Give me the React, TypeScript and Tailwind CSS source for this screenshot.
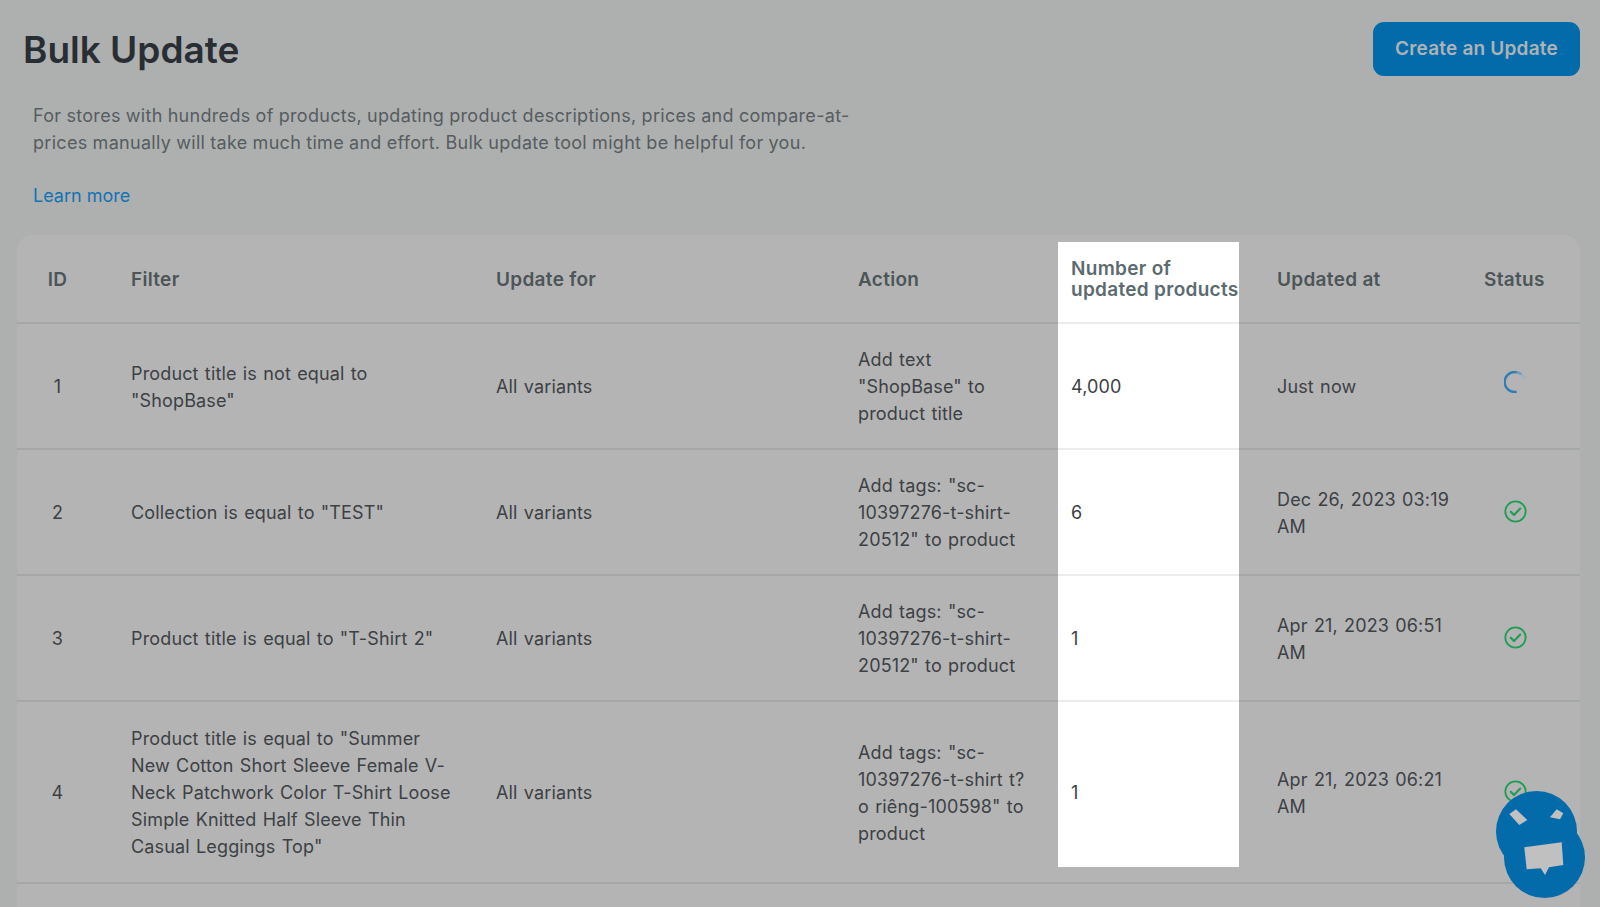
const GRID = 'grid grid-cols-[101px_365px_362px_213px_181px_232px_109px]';
const CELL = 'flex items-center border-b-[2px] border-[#a6a8a8] pb-[21px] pl-[13px] pr-[13px] pt-[22px] text-[18px] leading-[27px] tracking-[0.15px] [word-spacing:1px] text-[#3c4144]';

interface Row {
  id: number;
  filter: string;
  action: string;
  count: string;
  updated: string;
  status: 'running' | 'done';
}

const ROWS: Row[] = [
  { id: 1, filter: 'Product title is not equal to "ShopBase"', action: 'Add text "ShopBase" to product title', count: '4,000', updated: 'Just now', status: 'running' },
  { id: 2, filter: 'Collection is equal to "TEST"', action: 'Add tags: "sc-10397276-t-shirt-20512" to product', count: '6', updated: 'Dec 26, 2023 03:19 AM', status: 'done' },
  { id: 3, filter: 'Product title is equal to "T-Shirt 2"', action: 'Add tags: "sc-10397276-t-shirt-20512" to product', count: '1', updated: 'Apr 21, 2023 06:51 AM', status: 'done' },
  { id: 4, filter: 'Product title is equal to "Summer New Cotton Short Sleeve Female V-Neck Patchwork Color T-Shirt Loose Simple Knitted Half Sleeve Thin Casual Leggings Top"', action: 'Add tags: "sc-10397276-t-shirt t?o riêng-100598" to product', count: '1', updated: 'Apr 21, 2023 06:21 AM', status: 'done' },
];

function DoneIcon() {
  return (
    <svg width="23" height="23" viewBox="0 0 23 23" fill="none" stroke="#1f9d55" strokeWidth="1.8" strokeLinecap="round" strokeLinejoin="round" className="-mt-[2px]">
      <circle cx="11.5" cy="11.5" r="10.2" />
      <path d="M6.800 11.800l3.200 3.200 6.200-6.400" strokeWidth="2.200" />
    </svg>
  );
}

function Spinner() {
  return (
    <svg width="22" height="22" viewBox="0 0 22 22" fill="none" className="-mt-[10px]">
      <path d="M20.400 7.600A10 10 0 0 1 21 11" stroke="#adb5b8" strokeWidth="1.800" />
      <path d="M17.400 3.300A10 10 0 0 1 20.400 7.600" stroke="#9db0bd" strokeWidth="2.200" />
      <path d="M12.700 1.200A10 10 0 0 1 17.400 3.300" stroke="#6d9dc0" strokeWidth="2.400" />
      <path d="M12.700 1.200A10 10 0 1 0 12.700 20.800" stroke="#2f7db5" strokeWidth="2.400" />
    </svg>
  );
}

function ChatBubble() {
  return (
    <div className="fixed left-[1496px] top-[791px] h-[116px] w-[90px]">
      <div className="absolute left-0 top-0 h-[81px] w-[81px] rounded-full bg-[#046bab]" />
      <div className="absolute left-[8px] top-[26px] h-[81px] w-[81px] rounded-full bg-[#046bab]" />
      <svg className="absolute left-0 top-0" width="90" height="116" viewBox="0 0 90 116" fill="#c0c0c0">
        <path d="M13.300 23L20 18.300 31.300 29 23.300 34z" />
        <path d="M54 26.300L60.700 18.300 67.300 22.300 64 28.300z" />
        <path d="M28.300 56.300L65.700 51.300 67.300 74 53 76.300 49 84 44.700 77.300 30.700 78.300z" />
      </svg>
    </div>
  );
}

export default function App() {
  return (
    <div className="relative h-[907px] w-[1600px] overflow-hidden bg-[#aeb0af] font-['Inter',sans-serif]">
      <div className="flex items-start justify-between pl-[23px] pr-[20px] pt-[22px]">
        <h1 className="pt-[1px] text-[37px] font-semibold leading-[54px] text-[#282e33]">Bulk Update</h1>
        <button className="h-[54px] w-[207px] rounded-[11px] bg-[#046bab] pt-[1px] text-[19px] font-semibold tracking-[0.2px] text-[#adb3b6]">Create an Update</button>
      </div>

      <div className="pl-[33px] pt-[25px]">
        <p className="w-[840px] text-[18px] leading-[27px] tracking-[0.3px] text-[#565c5f] [word-spacing:-0.3px]">
          For stores with hundreds of products, updating product descriptions, prices and compare-at-prices manually will take much time and effort. Bulk update tool might be helpful for you.
        </p>
        <a className="mt-[26px] block text-[18px] leading-[27px] text-[#1273b5]">Learn more</a>
      </div>

      <div className="ml-[17px] mt-[26px] w-[1563px] rounded-t-[16px] bg-[#b4b4b4] pb-[40px]">
        <div className={`${GRID} h-[89px] text-[19px] font-semibold leading-[21px] tracking-[0.3px] text-[#4c5558]`}>
          <div className="flex items-center justify-center border-b-[2px] border-[#a6a8a8] pr-[20px] pt-[1px]">ID</div>
          <div className="flex items-center border-b-[2px] border-[#a6a8a8] pl-[13px] pt-[1px]">Filter</div>
          <div className="flex items-center border-b-[2px] border-[#a6a8a8] pl-[13px] pt-[1px]">Update for</div>
          <div className="flex items-center border-b-[2px] border-[#a6a8a8] pl-[13px] pt-[1px]">Action</div>
          <div className="mt-[7px] flex items-center whitespace-nowrap border-b-[2px] border-[#eceeee] bg-white pb-[6px] pl-[13px] text-[#5c6b6f]">Number of<br />updated products</div>
          <div className="flex items-center border-b-[2px] border-[#a6a8a8] pl-[38px] pt-[1px]">Updated at</div>
          <div className="flex items-center border-b-[2px] border-[#a6a8a8] pl-[13px] pt-[1px]">Status</div>
        </div>

        {ROWS.map((r, i) => (
          <div key={r.id} className={`${GRID} ${i === 3 ? 'min-h-[182px]' : ''}`}>
            <div className={`${CELL} justify-center pr-[33px]`}>{r.id}</div>
            <div className={`${CELL} pr-[30px]`}>{r.filter}</div>
            <div className={CELL}>All variants</div>
            <div className={`${CELL} pr-[26px]`}>{r.action}</div>
            <div className={`${CELL} relative ${i === 3 ? 'border-b-[#a6a8a8]' : 'border-b-[#eceeee] bg-white'}`}>
              {/* the highlight stops short of the last row's border */}
              {i === 3 && <div className="absolute inset-x-0 bottom-[15px] top-0 bg-white" />}
              <span className="relative">{r.count}</span>
            </div>
            <div className={`${CELL} pl-[38px]`}>{r.updated}</div>
            <div className={`${CELL} justify-center pr-[34px]`}>
              {r.status === 'running' ? <Spinner /> : <DoneIcon />}
            </div>
          </div>
        ))}
      </div>

      <ChatBubble />
    </div>
  );
}
